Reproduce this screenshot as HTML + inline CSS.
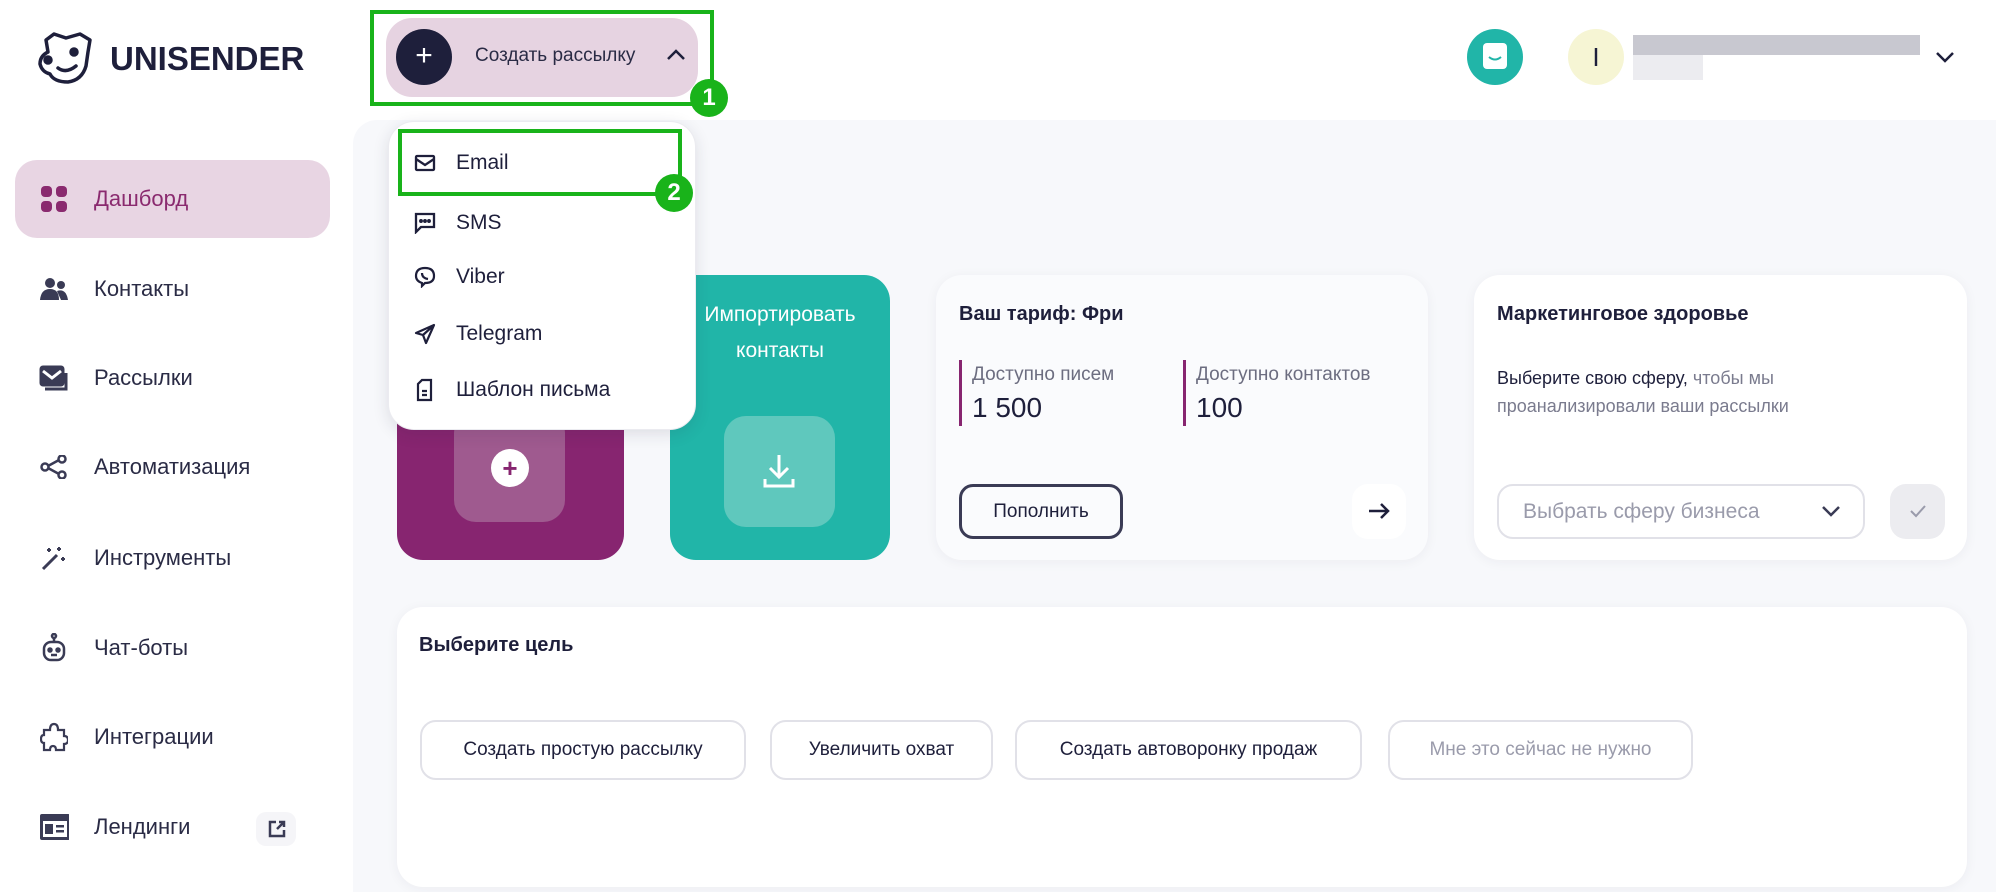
<!DOCTYPE html>
<html><head><meta charset="utf-8">
<style>
*{box-sizing:border-box;margin:0;padding:0}
body{width:1996px;height:892px;overflow:hidden;background:#fff;font-family:"Liberation Sans",sans-serif;color:#1e1f3b;position:relative}
.abs{position:absolute}
.main{left:353px;top:120px;width:1643px;height:772px;background:#f7f8fb;border-top-left-radius:24px}
.nav{left:15px;width:315px;height:78px;border-radius:22px;display:flex;align-items:center;font-size:22px;color:#2a2b45}
.nav .ic{width:30px;margin-left:24px;margin-right:25px;display:flex;justify-content:center}
.card{background:#fff;border-radius:26px;box-shadow:0 2px 12px rgba(30,30,60,.05)}
.btn{border:2px solid #e1e1e8;border-radius:16px;background:#fff;font-size:19px;display:flex;align-items:center;justify-content:center;height:60px;top:720px}
.dd{font-size:21px;display:flex;align-items:center;left:388px;width:308px;height:40px}
.dd svg{margin-left:26px;margin-right:20px}
</style></head><body>

<!-- logo -->
<svg class="abs" style="left:36px;top:30px" width="60" height="56" viewBox="0 0 60 56" fill="none" stroke="#1e1f3b" stroke-width="3.5" stroke-linejoin="round" stroke-linecap="round">
<path d="M10 10 L18 4 L30 8 L44 4 L54 10 L52 22 L50 36 Q46 50 32 52 Q18 52 14 44 Q6 42 4 34 Q4 26 12 22 Z"/>
<circle cx="38" cy="22" r="3" fill="#1e1f3b"/><path d="M22 38 Q30 44 40 36"/><circle cx="12" cy="30" r="3" fill="#1e1f3b"/>
</svg>
<div class="abs" style="left:110px;top:40px;font-size:33px;font-weight:bold;letter-spacing:0px;color:#1e1f3b">UNISENDER</div>

<div class="abs main"></div>

<!-- create button -->
<div class="abs" style="left:386px;top:18px;width:312px;height:79px;background:#e6d3e1;border-radius:26px"></div>
<div class="abs" style="left:396px;top:29px;width:56px;height:56px;border-radius:50%;background:#1e1f3b;color:#fff;font-size:30px;text-align:center;line-height:54px">+</div>
<div class="abs" style="left:475px;top:45px;font-size:19px;color:#2a2b45">Создать рассылку</div>
<svg class="abs" style="left:665px;top:48px" width="22" height="14"><path d="M3 11 L11 3 L19 11" stroke="#1e1f3b" stroke-width="2.5" fill="none"/></svg>
<div class="abs" style="left:370px;top:10px;width:344px;height:96px;border:4px solid #19b31a"></div>
<div class="abs" style="left:690px;top:79px;width:38px;height:38px;border-radius:50%;background:#19b31a;color:#fff;font-weight:bold;font-size:24px;text-align:center;line-height:38px">1</div>

<!-- top right -->
<div class="abs" style="left:1467px;top:29px;width:56px;height:56px;border-radius:50%;background:#21b5a8"></div>
<div class="abs" style="left:1483px;top:43px;width:24px;height:26px;background:#fff;border-radius:4px"></div>
<svg class="abs" style="left:1486px;top:55px" width="18" height="8"><path d="M3 2 Q9 7 15 2" stroke="#21b5a8" stroke-width="2" fill="none"/></svg>
<div class="abs" style="left:1568px;top:29px;width:56px;height:56px;border-radius:50%;background:#f6f5d4;text-align:center;line-height:56px;font-size:26px;color:#1e1f3b">I</div>
<div class="abs" style="left:1633px;top:35px;width:287px;height:20px;background:#c8c8d0"></div>
<div class="abs" style="left:1633px;top:55px;width:70px;height:25px;background:#ececf0"></div>
<svg class="abs" style="left:1934px;top:50px" width="22" height="14"><path d="M3 3 L11 11 L19 3" stroke="#1e1f3b" stroke-width="2.5" fill="none"/></svg>

<!-- sidebar -->
<div class="abs nav" style="top:160px;background:#e8d5e3;color:#8a2a6f"><span class="ic"><svg width="26" height="26"><g fill="#8a2a6f"><rect x="0" y="0" width="11" height="11" rx="4"/><rect x="15" y="0" width="11" height="11" rx="4"/><rect x="0" y="15" width="11" height="11" rx="4"/><rect x="15" y="15" width="11" height="11" rx="4"/></g></svg></span>Дашборд</div>
<div class="abs nav" style="top:250px"><span class="ic"><svg width="28" height="22"><g fill="#3a3b55"><circle cx="10" cy="5" r="5"/><circle cx="21" cy="7" r="4"/><path d="M0 22 Q1 11 10 11 Q19 11 19 22Z"/><path d="M17 13 Q26 10 28 22 L21 22Z"/></g></svg></span>Контакты</div>
<div class="abs nav" style="top:339px"><span class="ic"><svg width="30" height="26" fill="none" stroke="#3a3b55" stroke-width="3"><rect x="2" y="2" width="22" height="18" rx="2" fill="#3a3b55"/><path d="M4 6 L13 13 L22 6" stroke="#fff"/><path d="M6 24 H27 V8"/></svg></span>Рассылки</div>
<div class="abs nav" style="top:428px"><span class="ic"><svg width="28" height="24" fill="none" stroke="#3a3b55" stroke-width="2.5"><circle cx="5" cy="12" r="3.5"/><circle cx="22" cy="4" r="3.5"/><circle cx="22" cy="20" r="3.5"/><path d="M8 11 L19 5 M8 13 L19 19"/></svg></span>Автоматизация</div>
<div class="abs nav" style="top:519px"><span class="ic"><svg width="26" height="26" fill="none" stroke="#3a3b55" stroke-width="3"><path d="M2 24 L16 10"/><path d="M18 2 V6 M16 4 H20 M22 12 V16 M20 14 H24 M8 3 V7 M6 5 H10" stroke-width="2"/></svg></span>Инструменты</div>
<div class="abs nav" style="top:609px"><span class="ic"><svg width="26" height="30" fill="none" stroke="#3a3b55" stroke-width="2.5"><circle cx="13" cy="3" r="2"/><path d="M13 5 V9"/><rect x="3" y="9" width="20" height="18" rx="7"/><circle cx="9" cy="17" r="1.5" fill="#3a3b55"/><circle cx="17" cy="17" r="1.5" fill="#3a3b55"/><path d="M10 22 H16"/></svg></span>Чат-боты</div>
<div class="abs nav" style="top:698px"><span class="ic"><svg width="28" height="30" fill="none" stroke="#3a3b55" stroke-width="2.2"><path d="M4 8 H10 Q10 2 14 2 Q18 2 18 8 H24 V14 Q28 14 28 18 Q28 22 24 22 V28 H16 Q16 24 13 24 Q10 24 10 28 H4 V21 Q1 21 1 17 Q1 13 4 13 Z"/></svg></span>Интеграции</div>
<div class="abs nav" style="top:788px"><span class="ic"><svg width="32" height="28"><rect x="1" y="1" width="30" height="26" rx="2" fill="#3a3b55"/><rect x="4" y="8" width="24" height="16" fill="#fff"/><rect x="6" y="11" width="8" height="10" fill="#3a3b55"/><rect x="17" y="12" width="8" height="2.5" fill="#3a3b55"/><rect x="17" y="17" width="8" height="2.5" fill="#3a3b55"/></svg></span>Лендинги</div>
<div class="abs" style="left:256px;top:812px;width:40px;height:34px;border-radius:10px;background:#f5f5f8"></div>
<svg class="abs" style="left:268px;top:820px" width="18" height="18" fill="none" stroke="#3a3b55" stroke-width="2.5"><path d="M8 2 H2 V16 H16 V10"/><path d="M9 9 L16 2 M11 2 H16 V7"/></svg>

<!-- cards -->
<div class="abs" style="left:397px;top:275px;width:227px;height:285px;background:#872570;border-radius:26px"></div>
<div class="abs" style="left:454px;top:411px;width:111px;height:111px;background:#9f5a8f;border-radius:22px"></div>
<div class="abs" style="left:491px;top:449px;width:38px;height:38px;border-radius:50%;background:#fff;color:#872570;font-weight:bold;font-size:26px;text-align:center;line-height:38px">+</div>

<div class="abs" style="left:670px;top:275px;width:220px;height:285px;background:#21b5a8;border-radius:26px"></div>
<div class="abs" style="left:660px;top:297px;width:240px;text-align:center;color:#fff;font-size:21px;line-height:36px">Импортировать<br>контакты</div>
<div class="abs" style="left:724px;top:416px;width:111px;height:111px;background:#5fc8bd;border-radius:22px"></div>
<svg class="abs" style="left:762px;top:453px" width="34" height="36" fill="none" stroke="#fff" stroke-width="3"><path d="M17 2 V24 M8 15 L17 24 L26 15 M3 26 V33 H31 V26"/></svg>

<!-- dropdown -->
<div class="abs" style="left:388px;top:121px;width:308px;height:309px;background:#fff;border-radius:26px;box-shadow:0 4px 16px rgba(30,30,60,.12);border:1px solid #ebebf0"></div>
<div class="abs dd" style="top:143px"><svg width="22" height="18" fill="none" stroke="#1e1f3b" stroke-width="2.3"><rect x="2" y="2" width="18" height="14" rx="1"/><path d="M2 5 L11 11 L20 5"/></svg>Email</div>
<div class="abs dd" style="top:203px"><svg width="22" height="22" fill="none" stroke="#1e1f3b" stroke-width="2.3"><path d="M2 2 H20 V15 H7 L2 20 Z"/><circle cx="7" cy="9" r=".8" fill="#1e1f3b"/><circle cx="11" cy="9" r=".8" fill="#1e1f3b"/><circle cx="15" cy="9" r=".8" fill="#1e1f3b"/></svg>SMS</div>
<div class="abs dd" style="top:257px"><svg width="22" height="22" fill="none" stroke="#1e1f3b" stroke-width="2.2"><path d="M11 2 Q20 2 20 10 Q20 17 11 17 L8 20 V17 Q2 15 2 10 Q2 2 11 2Z"/><path d="M8 7 Q8 12 14 13"/></svg>Viber</div>
<div class="abs dd" style="top:314px"><svg width="22" height="22" fill="none" stroke="#1e1f3b" stroke-width="2.2" stroke-linejoin="round"><path d="M20 2 L2 10 L9 12 L12 20 Z M9 12 L20 2"/></svg>Telegram</div>
<div class="abs dd" style="top:370px"><svg width="22" height="24" fill="none" stroke="#1e1f3b" stroke-width="2.2"><path d="M8 2 H17 V22 H4 V6 Z"/><path d="M8 13 H13 M8 17 H13"/></svg>Шаблон письма</div>
<div class="abs" style="left:398px;top:129px;width:284px;height:67px;border:4px solid #19b31a"></div>
<div class="abs" style="left:655px;top:174px;width:38px;height:38px;border-radius:50%;background:#19b31a;color:#fff;font-weight:bold;font-size:24px;text-align:center;line-height:38px">2</div>

<!-- tariff card -->
<div class="abs card" style="left:936px;top:275px;width:492px;height:285px;background:#fafbfd"></div>
<div class="abs" style="left:959px;top:303px;font-size:20px;font-weight:bold;color:#1e1f3b">Ваш тариф: Фри</div>
<div class="abs" style="left:959px;top:360px;width:3px;height:66px;background:#872570"></div>
<div class="abs" style="left:972px;top:364px;font-size:19px;color:#6c6d80">Доступно писем</div>
<div class="abs" style="left:972px;top:392px;font-size:28px">1 500</div>
<div class="abs" style="left:1183px;top:360px;width:3px;height:66px;background:#872570"></div>
<div class="abs" style="left:1196px;top:364px;font-size:19px;color:#6c6d80">Доступно контактов</div>
<div class="abs" style="left:1196px;top:392px;font-size:28px">100</div>
<div class="abs" style="left:959px;top:484px;width:164px;height:55px;border:3px solid #3a3b55;border-radius:14px;font-size:19px;text-align:center;line-height:49px">Пополнить</div>
<div class="abs" style="left:1352px;top:484px;width:54px;height:55px;border-radius:16px;background:#fff"></div>
<svg class="abs" style="left:1367px;top:502px" width="24" height="18" fill="none" stroke="#1e1f3b" stroke-width="2.5"><path d="M2 9 H21 M14 2 L21 9 L14 16"/></svg>

<!-- health card -->
<div class="abs card" style="left:1474px;top:275px;width:493px;height:285px"></div>
<div class="abs" style="left:1497px;top:303px;font-size:20px;font-weight:bold">Маркетинговое здоровье</div>
<div class="abs" style="left:1497px;top:364px;font-size:18px;line-height:28px;color:#7a7b8e;width:420px"><span style="color:#1e1f3b">Выберите свою сферу,</span> чтобы мы проанализировали ваши рассылки</div>
<div class="abs" style="left:1497px;top:484px;width:368px;height:55px;border:2px solid #e1e1e8;border-radius:16px;font-size:21px;color:#9a9bab;line-height:51px;padding-left:24px">Выбрать сферу бизнеса</div>
<svg class="abs" style="left:1820px;top:504px" width="22" height="14"><path d="M3 3 L11 11 L19 3" stroke="#3a3b55" stroke-width="2.5" fill="none"/></svg>
<div class="abs" style="left:1890px;top:484px;width:55px;height:55px;border-radius:16px;background:#ececf0"></div>
<svg class="abs" style="left:1908px;top:503px" width="20" height="16"><path d="M3 8 L8 13 L17 3" stroke="#9a9bab" stroke-width="2" fill="none"/></svg>

<!-- goal card -->
<div class="abs card" style="left:397px;top:607px;width:1570px;height:280px"></div>
<div class="abs" style="left:419px;top:634px;font-size:20px;font-weight:bold">Выберите цель</div>
<div class="abs btn" style="left:420px;width:326px">Создать простую рассылку</div>
<div class="abs btn" style="left:770px;width:223px">Увеличить охват</div>
<div class="abs btn" style="left:1015px;width:347px">Создать автоворонку продаж</div>
<div class="abs btn" style="left:1388px;width:305px;color:#9a9bab">Мне это сейчас не нужно</div>

</body></html>
